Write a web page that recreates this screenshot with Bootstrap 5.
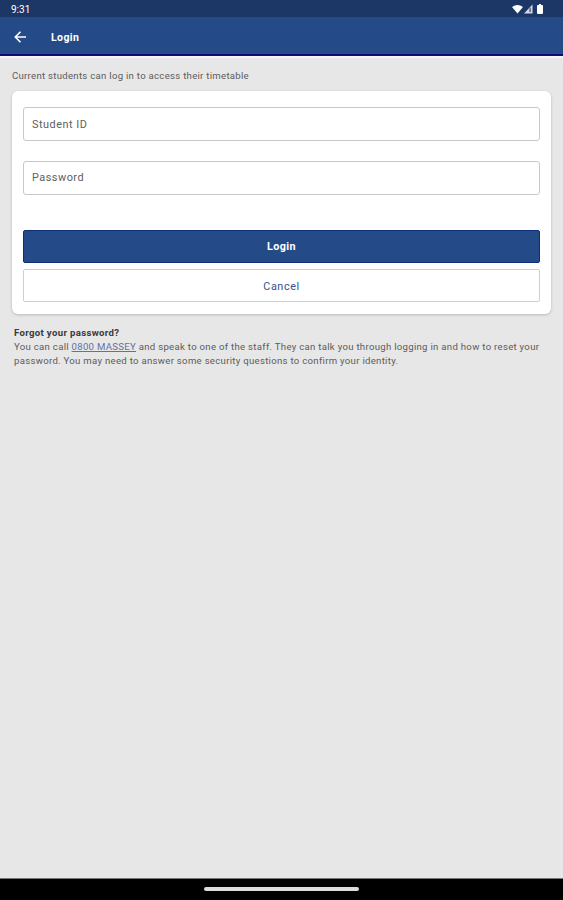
<!DOCTYPE html>
<html lang="en">
<head>
<meta charset="utf-8">
<meta name="viewport" content="width=device-width, initial-scale=1">
<title>Login</title>
<link href="https://cdn.jsdelivr.net/npm/bootstrap@5.3.0/dist/css/bootstrap.min.css" rel="stylesheet">
<style>
  body { font-family: Roboto, "Liberation Sans", sans-serif; background: #e7e7e7; color: #5c5c5c; height: 900px; overflow: hidden; font-size: 9.6px; }
  .status-bar { height: 17px; background: #1c3765; padding: 1px 18px 0 11px; font-size: 10px; }
  .app-bar { height: 39px; background: #244b87; border-bottom: 2px solid #0c0b78; padding-left: 14px; padding-top: 3px; }
  .app-title { font-size: 10.5px; font-weight: 700; margin-left: 25px; letter-spacing: .4px; padding-top: 2px; }
  .edge { height: 2px; background: #f6f4fb; }
  .intro { padding: 11px 12px 0; height: 33px; line-height: 14px; letter-spacing: .28px; }
  .login-card { margin: 0 12px; height: 223px; padding: 16px 11px 0; border-radius: 6px; box-shadow: 0 1px 3px rgba(0,0,0,.2); }
  .field { height: 34px; border: 1px solid #c8c8c8; border-radius: 3px; padding: 0 8px 1px; font-size: 10.9px; letter-spacing: .5px; color: #555; margin-bottom: 20px; min-height: 0; }
  .field::placeholder { color: #606060; opacity: 1; }
  .field-id { padding-bottom: 0; padding-top: 1px; }
  .action { height: 33px; padding: 0; border-radius: 2px; font-size: 10.8px; letter-spacing: .4px; line-height: 1; }
  .action-main { background: #244b87; border: 1px solid #0a2f78; color: #fff; font-weight: 700; margin-top: 15px; margin-bottom: 6px; padding-top: 1px; letter-spacing: .35px; }
  .action-alt { background: #fff; border: 1px solid #cfcfcf; color: #35508f; font-weight: 400; padding-top: 3px; letter-spacing: .6px; }
  .help { padding: 12px 12px 0 14px; line-height: 14px; letter-spacing: .29px; }
  .help strong { color: #3a3a3a; letter-spacing: .33px; }
  .help a { color: #6070a8; }
  .nav-strip { height: 22px; background: #000; border-top: 1px solid #777; }
  .handle { width: 155px; height: 4px; border-radius: 2px; background: #dcdcdc; margin-bottom: 1px; }
</style>
</head>
<body class="d-flex flex-column">
<div class="status-bar d-flex align-items-center justify-content-between text-white flex-shrink-0">
  <span>9:31</span>
  <svg width="34" height="12" viewBox="0 0 34 12" fill="#fff">
    <path d="M1 4Q6.500 0 12 4L6.500 10.500Z"/>
    <path d="M21.500 1.500V10.500H13Z" fill="#d5d9e4"/>
    <path d="M18.300 5.800L19.800 4.300V9H18.300Z" fill="#4e5f83"/>
    <path d="M27 2H28V1H30V2H31Q32 2 32 3V10Q32 11 31 11H27Q26 11 26 10V3Q26 2 27 2Z"/>
  </svg>
</div>
<header class="app-bar d-flex align-items-center text-white flex-shrink-0">
  <svg width="12" height="12" viewBox="0 0 12 12" fill="none" stroke="#fff" stroke-width="1.600"><path d="M12 6H1.500M6.500 .8L1.300 6L6.500 11.200"/></svg>
  <span class="app-title">Login</span>
</header>
<div class="edge flex-shrink-0"></div>
<p class="intro mb-0">Current students can log in to access their timetable</p>
<form class="login-card bg-white d-flex flex-column">
  <input class="form-control field field-id" type="text" placeholder="Student ID" aria-label="Student ID">
  <input class="form-control field" type="password" placeholder="Password" aria-label="Password">
  <button class="btn action action-main w-100" type="button">Login</button>
  <button class="btn action action-alt w-100" type="button">Cancel</button>
</form>
<section class="help">
  <strong class="d-block">Forgot your password?</strong>
  <span class="d-block text-nowrap">You can call <a href="#">0800 MASSEY</a> and speak to one of the staff. They can talk you through logging in and how to reset your</span>
  <span class="d-block text-nowrap">password. You may need to answer some security questions to confirm your identity.</span>
</section>
<footer class="nav-strip mt-auto d-flex justify-content-center align-items-center flex-shrink-0"><div class="handle"></div></footer>
<script src="https://cdn.jsdelivr.net/npm/bootstrap@5.3.0/dist/js/bootstrap.bundle.min.js"></script>
</body>
</html>
